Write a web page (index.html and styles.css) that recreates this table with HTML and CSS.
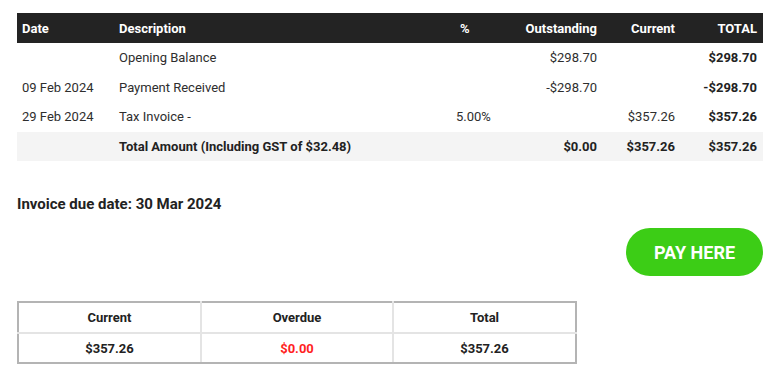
FILE: index.html
```html
<!DOCTYPE html>
<html>
<head>
<meta charset="utf-8">
<link rel="stylesheet" href="styles.css">
</head>
<body>
<div class="page">
  <table class="lines">
    <colgroup>
      <col class="c-date"><col class="c-desc"><col class="c-pct"><col class="c-out"><col class="c-cur"><col class="c-tot">
    </colgroup>
    <thead>
      <tr>
        <th class="left first">Date</th>
        <th class="left">Description</th>
        <th class="pct-h">%</th>
        <th class="right">Outstanding</th>
        <th class="right">Current</th>
        <th class="right">TOTAL</th>
      </tr>
    </thead>
    <tbody>
      <tr class="r1">
        <td class="first"></td><td>Opening Balance</td><td></td><td class="right">$298.70</td><td></td><td class="right strong">$298.70</td>
      </tr>
      <tr class="r2">
        <td class="first">09 Feb 2024</td><td>Payment Received</td><td></td><td class="right">-$298.70</td><td></td><td class="right strong">-$298.70</td>
      </tr>
      <tr class="r3">
        <td class="first">29 Feb 2024</td><td>Tax Invoice -</td><td>5.00%</td><td></td><td class="right">$357.26</td><td class="right strong">$357.26</td>
      </tr>
      <tr class="total">
        <td class="first"></td><td>Total Amount (Including GST of $32.48)</td><td></td><td class="right">$0.00</td><td class="right">$357.26</td><td class="right">$357.26</td>
      </tr>
    </tbody>
  </table>

  <p class="due">Invoice due date: 30 Mar 2024</p>

  <div class="pay-row">
    <a class="pay" href="#">PAY HERE</a>
  </div>

  <table class="summary">
    <colgroup><col class="s1"><col class="s2"><col class="s3"></colgroup>
    <tr><th>Current</th><th>Overdue</th><th>Total</th></tr>
    <tr><td>$357.26</td><td class="red">$0.00</td><td>$357.26</td></tr>
  </table>
</div>
</body>
</html>
```

FILE: styles.css
```css
* { box-sizing: border-box; }
html, body { margin: 0; padding: 0; background: #fff; }
body {
  font-family: Roboto, "Liberation Sans", Arial, sans-serif;
  color: #2e2e2e;
  font-size: 13px;
}
.page {
  padding: 13px 0 0 17px;
  width: 763px;
}
.lines {
  width: 746px;
  border-collapse: collapse;
  table-layout: fixed;
}
.c-date { width: 96px; }
.c-desc { width: 337px; }
.c-pct { width: 61px; }
.c-out { width: 92px; }
.c-cur { width: 78px; }
.c-tot { width: 82px; }
.lines th {
  background: #232323;
  color: #fff;
  font-weight: 700;
  height: 30px;
  padding: 0 6px;
  vertical-align: middle;
}
.lines td {
  padding: 0 6px;
  height: 29.5px;
  vertical-align: middle;
  white-space: nowrap;
}
.lines th.left, .lines td { text-align: left; }
.lines .first { padding-left: 5px; }
.lines .right { text-align: right; }
.lines th.pct-h { text-align: left; padding-left: 10px; }
.lines td.strong { font-weight: 700; color: #222; }
.lines tr.total td {
  background: #f4f4f4;
  font-weight: 700;
  color: #222;
}
.due {
  margin: 33px 0 0 0;
  font-size: 15px;
  line-height: 20px;
  font-weight: 700;
  color: #222;
}
.pay-row {
  display: flex;
  justify-content: flex-end;
  width: 746px;
  margin-top: 14px;
}
.pay {
  display: flex;
  align-items: center;
  justify-content: center;
  width: 137px;
  height: 48px;
  border-radius: 24px;
  background: #3ccd16;
  color: #fff;
  font-weight: 700;
  font-size: 18px;
  text-decoration: none;
}
.summary {
  margin-top: 25px;
  width: 558px;
  border-collapse: collapse;
  table-layout: fixed;
  border: 2px solid #b4b4b4;
}
.s1 { width: 183px; }
.s2 { width: 192px; }
.s3 { width: 183px; }
.summary th, .summary td {
  border: 2px solid #e4e4e4;
  text-align: center;
  font-weight: 700;
  color: #222;
  vertical-align: middle;
  padding: 0;
}
.summary th { height: 31px; }
.summary td { height: 30px; }
.summary tr:first-child th { border-top: 2px solid #b4b4b4; }
.summary tr:last-child td { border-bottom: 2px solid #b4b4b4; }
.summary th:first-child, .summary td:first-child { border-left: 2px solid #b4b4b4; }
.summary th:last-child, .summary td:last-child { border-right: 2px solid #b4b4b4; }
.summary .red { color: #ff1f1f; }
```
